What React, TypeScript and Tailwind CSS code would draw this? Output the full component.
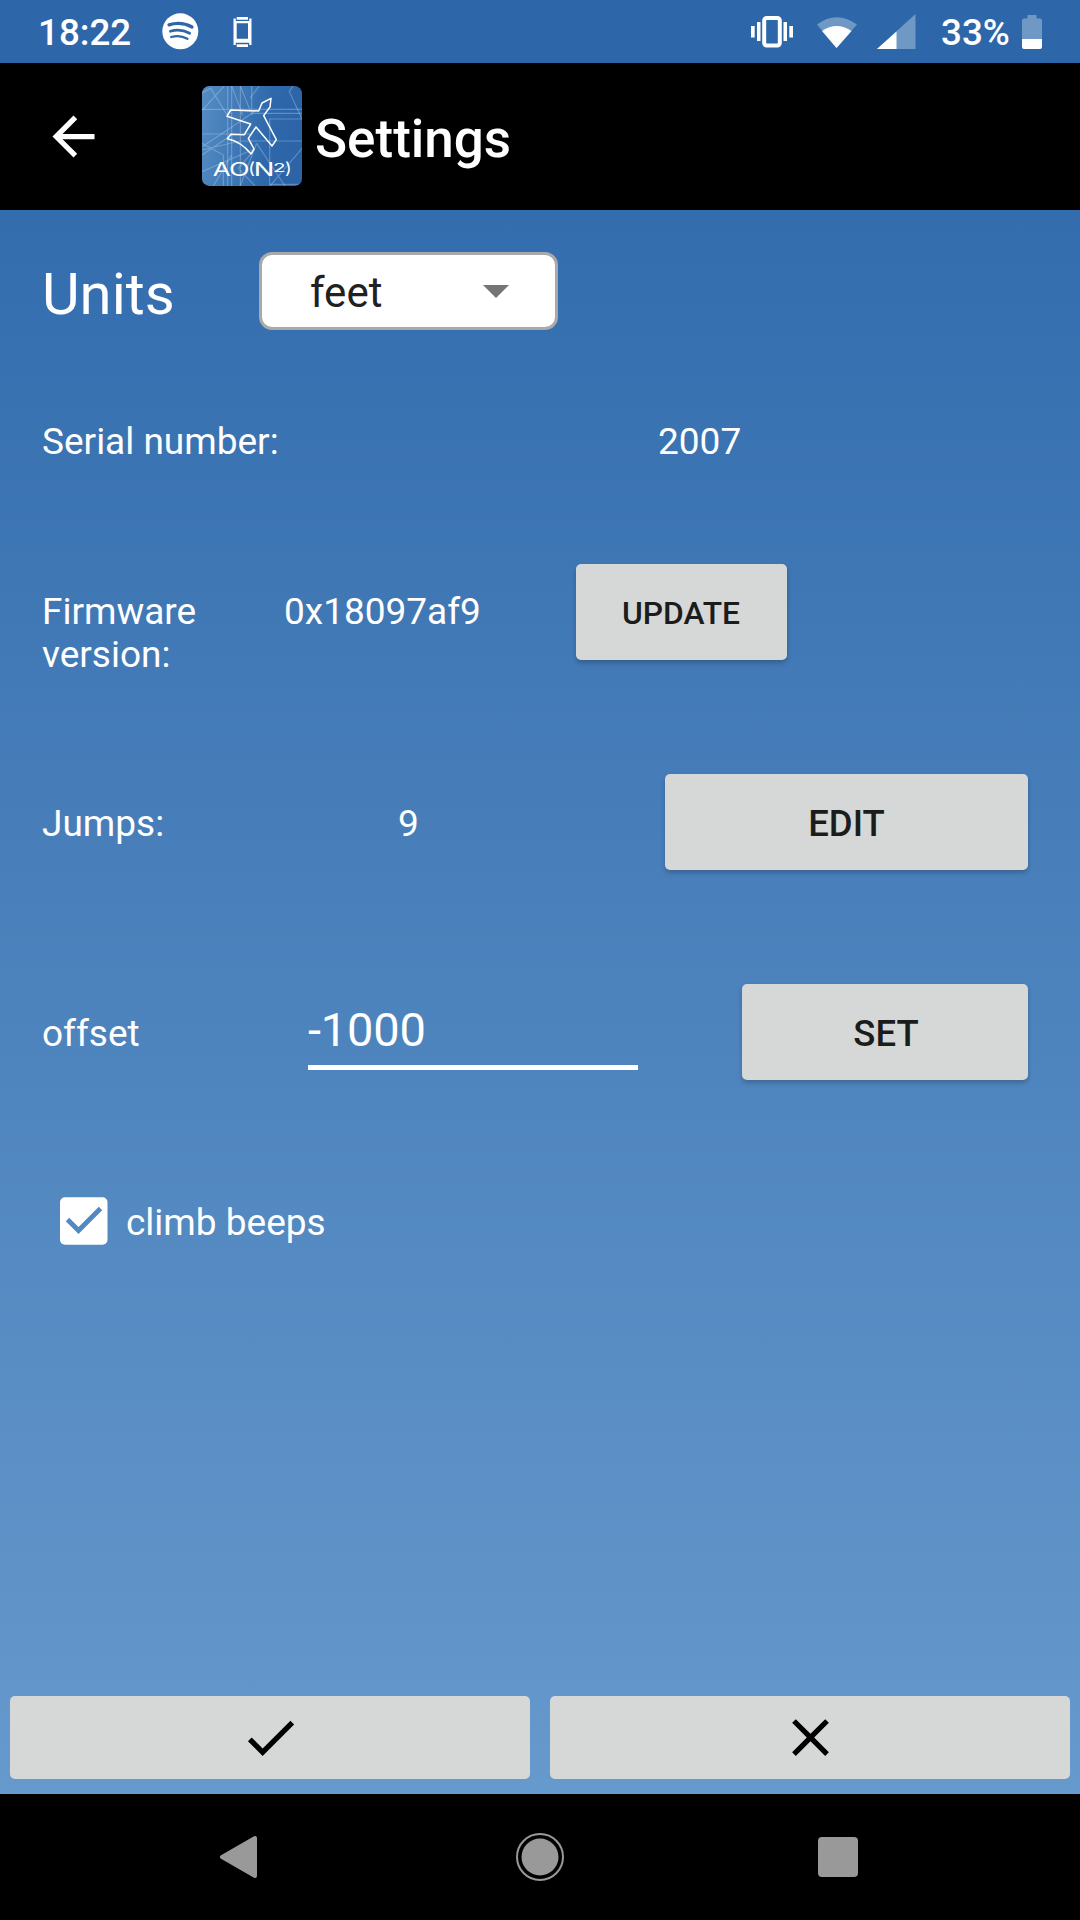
import React from "react";

function StatusBar() {
  return (
    <div className="flex h-[63px] shrink-0 items-center bg-[#2d67aa] pl-[38px] text-[36.75px] font-medium leading-none text-white">
      <span className="w-[123px] pt-[3px]">18:22</span>
      <svg className="-mt-[1px] mr-[34px] h-[38px] w-[38px] shrink-0" viewBox="0 0 38 38">
        <circle cx="19.3" cy="19.3" r="18" fill="#fff" />
        <g fill="none" stroke="#2d67aa" strokeLinecap="round">
          <path d="M8 12.9Q20 9.2 31 15" strokeWidth="3.2" />
          <path d="M9.4 19.3Q19.5 16.3 28.6 21.3" strokeWidth="2.7" />
          <path d="M10.2 25Q19 22.4 26.4 26.8" strokeWidth="2.3" />
        </g>
      </svg>
      <svg className="h-[30px] w-[20px] shrink-0" viewBox="0 0 20 30">
        <path d="M0.500 1.500h18v26.500h-18z" fill="#fff" />
        <path d="M2.800 0h13.400v4H2.800zM2.800 25.800h13.400V30H2.800zM3.700 6.300h11.300v15.400H3.700z" fill="#2d67aa" />
        <path d="M3.700 0h11.300v2.700H3.700zM3.700 27.200h11.300V30H3.700z" fill="#fff" />
      </svg>
      <div className="grow" />
      <svg className="mr-[22px] h-[32px] w-[44px] shrink-0" viewBox="0 0 44 32">
        <rect x="14.200" y="2" width="15.600" height="27.500" rx="2.500" fill="none" stroke="#fff" strokeWidth="4" />
        <path d="M1 10h3.700v11.500H1zM7 6h3.500v19H7zM33.500 6H37v19h-3.500zM39.300 10H43v11.500h-3.700z" fill="#fff" />
      </svg>
      <svg className="mr-[19px] h-[34px] w-[42px] shrink-0" viewBox="0 0 42 34">
        <path d="M1 9.500Q20.500-5 41 9.500L20.500 33z" fill="#fff" opacity="0.320" />
        <path d="M6 16Q20.500 6 35.500 16L20.500 33z" fill="#fff" />
      </svg>
      <svg className="mr-[25px] h-[35px] w-[39px] shrink-0" viewBox="0 0 39 35">
        <path d="M38.500 0v35H0z" fill="#fff" opacity="0.320" />
        <path d="M19.500 17.500V35H0z" fill="#fff" />
      </svg>
      <span className="w-[81px] pt-[3px]">33%</span>
      <svg className="mr-[38px] h-[34px] w-[20px] shrink-0" viewBox="0 0 20 34">
        <path d="M5.500 0h9v3.500H18q2 0 2 2V24H0V5.500q0-2 2-2h3.500z" fill="#fff" opacity="0.320" />
        <path d="M0 24h20v8q0 2-2 2H2q-2 0-2-2z" fill="#fff" />
      </svg>
    </div>
  );
}

function Logo() {
  return (
    <svg className="h-[101px] w-[101px] shrink-0" viewBox="36 33 303 303">
      <defs>
        <linearGradient id="logoBg" x1="0" x2="1" y1="0" y2="0.150">
          <stop offset="0" stopColor="#568dc3" />
          <stop offset="0.700" stopColor="#2f69ab" />
          <stop offset="1" stopColor="#2c64a7" />
        </linearGradient>
        <clipPath id="logoClip">
          <rect x="36" y="33" width="300" height="300" rx="22" />
        </clipPath>
      </defs>
      <g clipPath="url(#logoClip)">
        <rect x="36" y="33" width="300" height="300" fill="url(#logoBg)" />
        <g fill="none" stroke="#c5ddf2" strokeOpacity="0.330" strokeWidth="3.500">
          <path d="M36 103H336M185 115H336M36 177H180M336 132H239V328H336M113 33V333M125 33V333M151 33V333M185 33V120" />
          <path d="M36 54L62 40L112 121M103 33L36 106M125 33L158 120M151 33L182 110M208 33L180 70M309 33L298 50L336 132" />
          <path d="M36 215L120 160L200 105M36 205L100 240V333M36 225L150 198H336M36 240L125 180" />
          <path d="M125 240L70 333M36 290L185 225M200 205L150 333M200 205L285 333M336 220L240 333M180 240L145 280L195 333" />
        </g>
        <path d="M243 70L216 84L206 108L122 105L111 124L182 147L163 179L122 178L112 191Q153 199 183 237L192 222L175 190L198 156L246 213L259 194L221 122L240 96Z" fill="none" stroke="#fff" strokeWidth="4.500" strokeLinejoin="round" />
        <g fill="#fff" fontFamily="Inter, sans-serif" fontWeight="400">
          <text x="68" y="302" fontSize="54" textLength="54" lengthAdjust="spacingAndGlyphs">A</text>
          <text x="117" y="302" fontSize="54" textLength="62" lengthAdjust="spacingAndGlyphs">O</text>
          <text x="175" y="297" fontSize="48" textLength="20" lengthAdjust="spacingAndGlyphs">(</text>
          <text x="191" y="302" fontSize="54" textLength="62" lengthAdjust="spacingAndGlyphs">N</text>
          <text x="249" y="290" fontSize="36" textLength="38" lengthAdjust="spacingAndGlyphs">2</text>
          <text x="285" y="297" fontSize="48" textLength="20" lengthAdjust="spacingAndGlyphs">)</text>
        </g>
      </g>
    </svg>
  );
}

function AppBar() {
  return (
    <header className="flex h-[147px] shrink-0 items-center bg-black pl-[42px]">
      <svg className="mr-[97px] h-[63px] w-[63px] shrink-0" viewBox="0 0 24 24">
        <path d="M20 11H7.830l5.590-5.590L12 4l-8 8 8 8 1.410-1.410L7.830 13H20v-2z" fill="#fff" />
      </svg>
      <Logo />
      <h1 className="ml-[12px] pt-[5px] text-[53px] font-medium leading-none text-white">Settings</h1>
    </header>
  );
}

function Button({ className, children }: { className: string; children: React.ReactNode }) {
  return (
    <button
      className={`flex shrink-0 items-center justify-center rounded-[5px] bg-[#d6d8d7] font-medium text-[#1b1c1c] shadow-[0_3px_5px_rgba(0,0,0,0.22)] ${className}`}
    >
      {children}
    </button>
  );
}

function Settings() {
  return (
    <main className="flex grow flex-col bg-linear-to-b from-[#336dae] to-[#6699cc] text-[37px] leading-[43px] text-white">
      <div className="mt-[42px] flex h-[78px] items-center pl-[42px]">
        <span className="w-[217px] pt-[6px] text-[58px] leading-[68px]">Units</span>
        <div className="flex h-[78px] w-[299px] items-center justify-between rounded-[13px] border-[3px] border-[#a9a9a9] bg-white pl-[48px] pr-[46px] text-[42px] text-[#212121]">
          <span className="pt-[3px]">feet</span>
          <svg className="h-[13px] w-[26px]" viewBox="0 0 26 13">
            <path d="M0 0h26L13 13z" fill="#757575" />
          </svg>
        </div>
      </div>

      <div className="mt-[90px] flex h-[43px]">
        <span className="w-[616px] pl-[42px]">Serial number:</span>
        <span className="pl-[42px]">2007</span>
      </div>

      <div className="mt-[101px] flex h-[96px] items-start pl-[42px]">
        <span className="mt-[26px] w-[242px] pr-[60px]">Firmware version:</span>
        <span className="mt-[26px] w-[292px]">0x18097af9</span>
        <Button className="h-[96px] w-[211px] pt-[2px] pr-[1px] text-[31.8px]">UPDATE</Button>
      </div>

      <div className="mt-[114px] flex h-[96px] items-center pl-[42px]">
        <span className="w-[356px] pt-[3px]">Jumps:</span>
        <span className="w-[267px] pt-[3px]">9</span>
        <Button className="h-[96px] w-[363px] pt-[3px] text-[36.5px]">EDIT</Button>
      </div>

      <div className="mt-[114px] flex h-[96px] items-center pl-[42px]">
        <span className="w-[266px] pt-[3px]">offset</span>
        <div className="mr-[104px] flex h-[86px] w-[330px] flex-col justify-between self-start border-b-[5px] border-white text-[47px]">
          <span className="mt-[18px] leading-[56px] tracking-[-0.2px]">-1000</span>
        </div>
        <Button className="h-[96px] w-[286px] pt-[3px] pl-[2px] text-[36.5px]">SET</Button>
      </div>

      <div className="mt-[117px] flex h-[48px] items-center pl-[60px]">
        <svg className="mr-[18px] h-[48px] w-[48px]" viewBox="0 0 48 48">
          <rect y="0.300" width="47.500" height="47.500" rx="5" fill="#fff" />
          <path d="M7.500 22.500L18.500 33.500L40.500 11.500" fill="none" stroke="#5189c2" strokeWidth="4.800" />
        </svg>
        <span className="pt-[3px]">climb beeps</span>
      </div>

      <div className="mt-auto mb-[15px] flex gap-[20px] px-[10px]">
        <button className="flex h-[83px] grow basis-0 items-center justify-center rounded-[5px] bg-[#d6d8d7]">
          <svg className="h-[63px] w-[63px]" viewBox="0 0 24 24">
            <path d="M9 16.170L4.830 12l-1.420 1.410L9 19 21 7l-1.410-1.410z" fill="#000" />
          </svg>
        </button>
        <button className="flex h-[83px] grow basis-0 items-center justify-center rounded-[5px] bg-[#d6d8d7]">
          <svg className="h-[63px] w-[63px]" viewBox="0 0 24 24">
            <path d="M19 6.410L17.590 5 12 10.590 6.410 5 5 6.410 10.590 12 5 17.590 6.410 19 12 13.410 17.590 19 19 17.590 13.410 12z" fill="#000" />
          </svg>
        </button>
      </div>
    </main>
  );
}

function NavigationBar() {
  return (
    <nav className="flex h-[126px] shrink-0 items-center justify-between bg-black pl-[219px] pr-[222px]">
      <svg className="h-[44px] w-[38px]" viewBox="0 0 38 44">
        <path d="M3 22L36 3v38z" fill="#999" stroke="#999" strokeWidth="4" strokeLinejoin="round" />
      </svg>
      <svg className="ml-[4px] h-[48px] w-[48px]" viewBox="0 0 48 48">
        <circle cx="24" cy="24" r="23" fill="none" stroke="#999" strokeWidth="2" />
        <circle cx="24" cy="24" r="18.500" fill="#999" />
      </svg>
      <div className="h-[40px] w-[40px] rounded-[4px] bg-[#999]" />
    </nav>
  );
}

export default function App() {
  return (
    <div className="flex h-[1920px] w-[1080px] flex-col overflow-hidden font-[Roboto,sans-serif]">
      <StatusBar />
      <AppBar />
      <Settings />
      <NavigationBar />
    </div>
  );
}
